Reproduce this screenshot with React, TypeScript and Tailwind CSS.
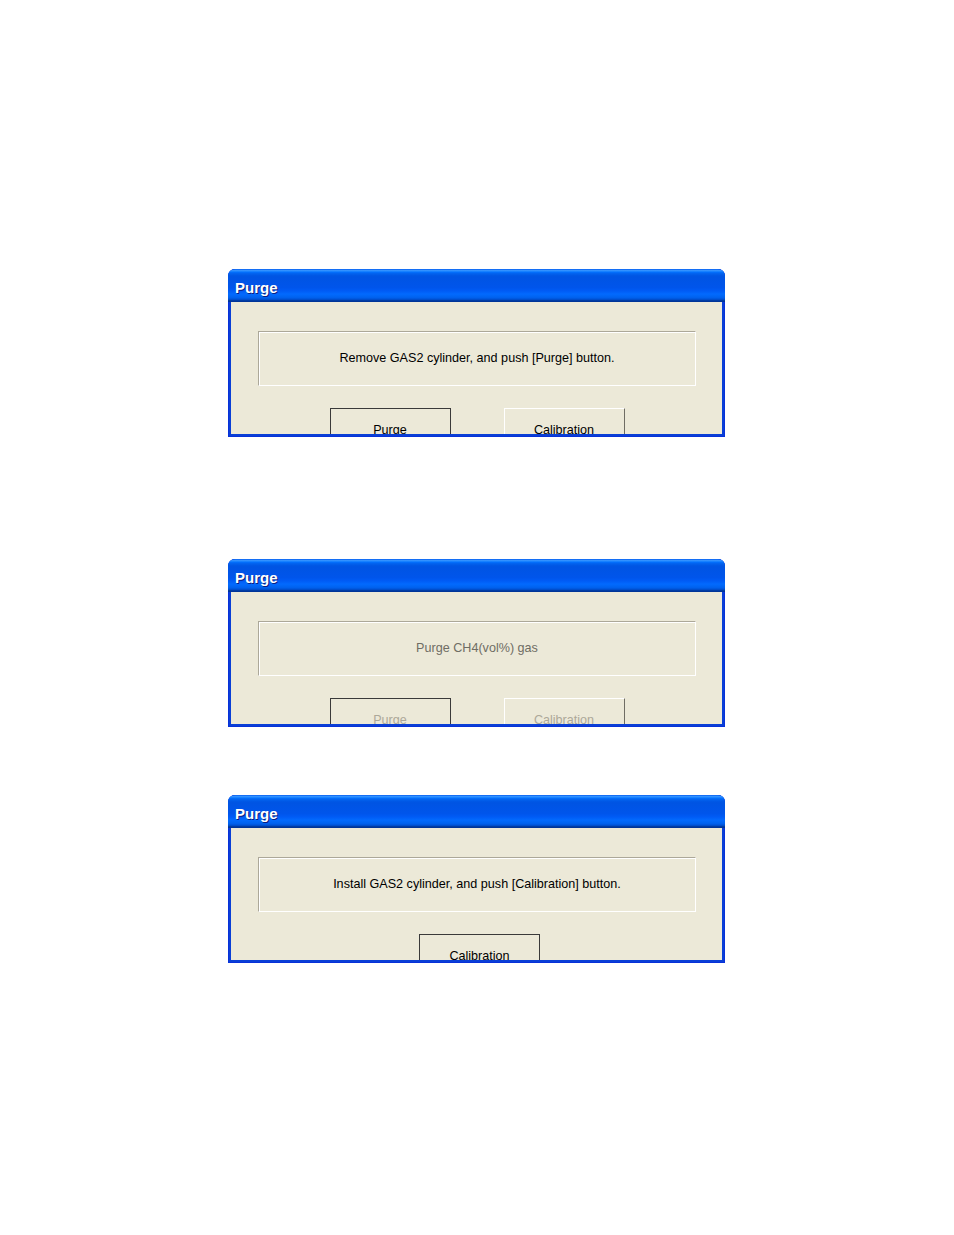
type Btn = { label: string; isDefault?: boolean; disabled?: boolean };

function Button({ label, isDefault, disabled }: Btn) {
  const frame = isDefault
    ? 'border border-[#3a3a3a]'
    : 'border-t border-l border-r border-t-white border-l-white border-r-[#6f6d64]';
  return (
    <div className={`w-[121px] h-[40px] shrink-0 flex justify-center pt-[13px] bg-[#ECE9D8] ${frame}`}>
      <span className={`text-[12.6px] leading-[16px] ${disabled ? 'text-[#ACA899]' : 'text-black'}`}>{label}</span>
    </div>
  );
}

function Dialog({
  message,
  buttons,
  disabled,
  buttonRow = 'justify-center gap-[53px]',
}: {
  message: string;
  buttons: Btn[];
  disabled?: boolean;
  buttonRow?: string;
}) {
  return (
    <div className="w-[497px] h-[168px] flex flex-col rounded-t-[7px] bg-[#0A3FD6] px-[3px] pb-[3px] shadow-[inset_0_0_0_1px_#0831D9]">
      <div className="h-[33px] -mx-[3px] shrink-0 rounded-t-[7px] flex items-center pl-[7px] pt-[3px] bg-[linear-gradient(180deg,#0058EE_0%,#3593FF_4%,#288EFF_6%,#127DFF_8%,#036FFC_10%,#0262EE_14%,#0057E5_20%,#0054E3_24%,#0055EB_56%,#005BF5_66%,#026AFE_76%,#0062EF_86%,#0052D6_92%,#0040AB_94%,#003092_100%)]">
        <span className="text-white font-bold text-[15px] leading-none [text-shadow:1px_1px_0_#0A1E80]">Purge</span>
      </div>
      <div className="flex-1 bg-[#ECE9D8] overflow-hidden pt-[29px] pl-[27px]">
        <div className="w-[438px] h-[55px] flex items-center justify-center border-t border-l border-t-[#ACA899] border-l-[#ACA899] border-b border-r border-b-white border-r-white shadow-[inset_1px_1px_0_#fff]">
          <span className={`text-[12.6px] ${disabled ? 'text-[#6f6d64]' : 'text-black'}`}>{message}</span>
        </div>
        <div className={`flex w-[438px] mt-[22px] ${buttonRow}`}>
          {buttons.map((b) => (
            <Button key={b.label} {...b} />
          ))}
        </div>
      </div>
    </div>
  );
}

export default function App() {
  return (
    <div className="w-[954px] min-h-[1235px] bg-white pt-[269px] pl-[228px] font-['Liberation_Sans',Arial,sans-serif]">
      <Dialog
        message="Remove GAS2 cylinder, and push [Purge] button."
        buttons={[{ label: 'Purge', isDefault: true }, { label: 'Calibration' }]}
      />
      <div className="h-[122px]" />
      <Dialog
        message="Purge CH4(vol%) gas"
        disabled
        buttons={[
          { label: 'Purge', isDefault: true, disabled: true },
          { label: 'Calibration', disabled: true },
        ]}
      />
      <div className="h-[68px]" />
      <Dialog
        message="Install GAS2 cylinder, and push [Calibration] button."
        buttons={[{ label: 'Calibration', isDefault: true }]}
        buttonRow="pl-[161px]"
      />
    </div>
  );
}
